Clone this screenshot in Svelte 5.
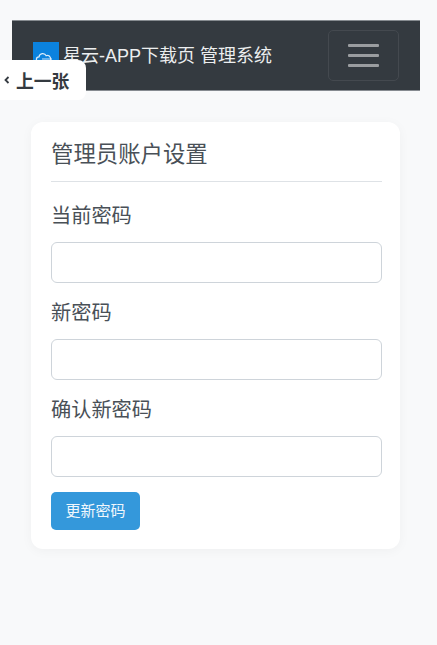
<script>
  const fields = ['当前密码', '新密码', '确认新密码'];
</script>

<div class="page">
  <nav class="navbar">
    <div class="brand">
      <span class="logo">
        <svg viewBox="0 0 26 26" width="26" height="26">
          <rect width="26" height="26" fill="#0b82de" />
          <path d="M6 20a2.600 2.600 0 0 1 0-5.200 3.800 3.800 0 0 1 7.200-1 3 3 0 0 1 2.300 6.200z" fill="none" stroke="#dcecfa" stroke-width="1.200" />
          <path d="M9 17h10M9 19h10" stroke="#dcecfa" stroke-width="0.900" />
        </svg>
      </span>
      <span class="name">星云-APP下载页 管理系统</span>
    </div>
    <button class="toggler" aria-label="菜单">
      <span></span><span></span><span></span>
    </button>
  </nav>

  <a class="prev" href="#prev">
    <svg class="chev" viewBox="0 0 6 8" width="6" height="8">
      <path d="M4.500 1 1.500 4l3 3" fill="none" stroke="#343a40" stroke-width="1.800" />
    </svg>
    上一张
  </a>

  <main class="card">
    <h2>管理员账户设置</h2>
    <form>
      {#each fields as label}
        <div class="group">
          <label for={label}>{label}</label>
          <input id={label} type="password" />
        </div>
      {/each}
      <button class="submit" type="button">更新密码</button>
    </form>
  </main>
</div>

<style>
  :global(body) {
    margin: 0;
    background: #f8f9fa;
    font-family: "Liberation Sans", "Noto Sans CJK SC", sans-serif;
  }
  .page {
    position: relative;
    height: 645px;
    padding: 20px 17px 0 12px;
    box-sizing: border-box;
    overflow: hidden;
  }
  .navbar {
    height: 71px;
    background: #343a40;
    border: 1px solid #868b90;
    border-width: 1px 0;
    box-sizing: border-box;
    display: flex;
    align-items: center;
    justify-content: space-between;
    padding: 0 21px;
  }
  .brand {
    display: flex;
    align-items: center;
    gap: 4px;
    color: #eceeef;
    font-size: 18px;
    white-space: nowrap;
  }
  .name { margin-bottom: 4px; }
  .logo {
    display: block;
    width: 26px;
    height: 26px;
    margin-bottom: 1px;
  }
  .logo svg { display: block; }
  .toggler {
    width: 71px;
    height: 51px;
    background: transparent;
    border: 1px solid #44494f;
    border-radius: 5px;
    display: flex;
    flex-direction: column;
    align-items: center;
    justify-content: center;
    gap: 7.700px;
    padding: 0;
  }
  .toggler span {
    width: 31px;
    height: 2.600px;
    border-radius: 1px;
    background: #9a9da0;
  }
  .prev {
    position: absolute;
    left: 0;
    top: 60px;
    width: 86px;
    height: 40px;
    box-sizing: border-box;
    padding-left: 4px;
    background: #fff;
    border-radius: 0 8px 8px 0;
    display: flex;
    align-items: center;
    gap: 6px;
    color: #343a40;
    font-size: 17.800px;
    font-weight: 700;
    text-decoration: none;
    white-space: nowrap;
  }
  .card {
    width: 369px;
    height: 427px;
    margin: 31px 0 0 19px;
    padding: 20px 18.500px 20px 20px;
    box-sizing: border-box;
    background: #fff;
    border-radius: 12px;
    box-shadow: 0 2px 12px rgba(0, 0, 0, 0.04);
  }
  h2 {
    margin: 0 0 20px;
    padding-bottom: 13px;
    border-bottom: 1px solid #dee2e6;
    font-size: 22.400px;
    font-weight: 400;
    line-height: 26px;
    color: #495057;
  }
  .group + .group { margin-top: 16px; }
  label {
    display: block;
    margin-bottom: 11px;
    font-size: 20.200px;
    line-height: 29px;
    color: #495057;
  }
  input {
    display: block;
    width: 100%;
    height: 41px;
    box-sizing: border-box;
    border: 1px solid #ced4da;
    border-radius: 6px;
    background: #fff;
  }
  .submit {
    display: block;
    width: 89px;
    height: 38px;
    margin-top: 15px;
    padding: 0 0 3px;
    border: 0;
    border-radius: 5px;
    background: #3498db;
    color: #f0f7fc;
    font: 15px "Liberation Sans", "Noto Sans CJK SC", sans-serif;
  }
</style>
